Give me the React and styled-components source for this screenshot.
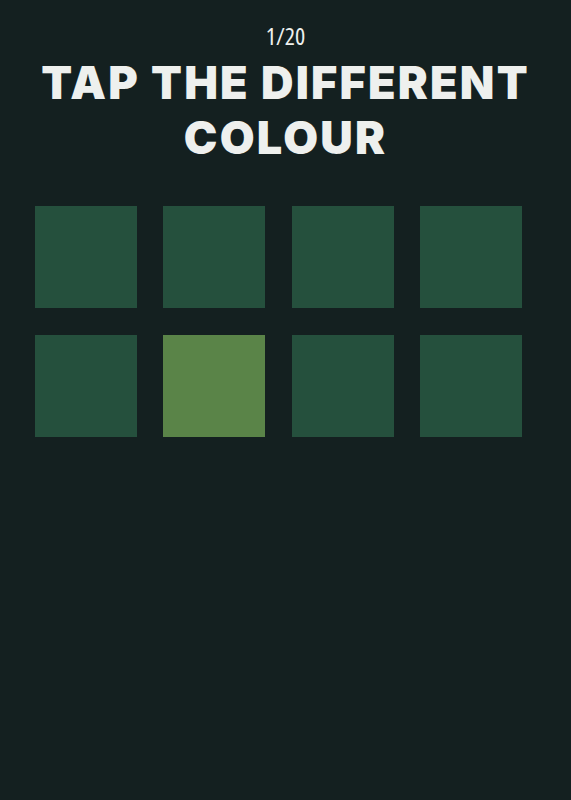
import React from 'react';
import styled, { createGlobalStyle } from 'styled-components';

const GlobalStyle = createGlobalStyle`
  html, body {
    margin: 0;
    padding: 0;
    background: #142020;
  }
`;

// one odd tile per round, everything else shares the base colour
const tiles = [
  false, false, false, false,
  false, true, false, false,
];

const App = () => (
  <>
    <GlobalStyle />
    <Screen>
      <Counter>1/20</Counter>
      <Title>
        Tap the different
        <br />
        colour
      </Title>
      <Board>
        {tiles.map((odd, i) => (
          <Tile key={i} $odd={odd} />
        ))}
      </Board>
    </Screen>
  </>
);

export default App;

const Screen = styled.div`
  min-height: 800px;
  display: flex;
  flex-direction: column;
  align-items: center;
  background: #142020;
  padding-top: 20px;
  box-sizing: border-box;
`;

const Counter = styled.div`
  font-family: "Open Sans", sans-serif;
  font-stretch: condensed;
  font-size: 24px;
  line-height: 32px;
  color: #eef0ee;
`;

const Title = styled.h1`
  margin: 3px 0 0;
  text-align: center;
  font-family: Inter, sans-serif;
  font-weight: 900;
  font-size: 45px;
  line-height: 55px;
  letter-spacing: 2.2px;
  text-transform: uppercase;
  white-space: nowrap;
  color: #eef0ee;
`;

const Board = styled.div`
  align-self: flex-start;
  margin: 41px 0 0 35px;
  display: grid;
  grid-template-columns: repeat(4, 102px);
  grid-auto-rows: 102px;
  column-gap: 26.4px;
  row-gap: 27px;
`;

const Tile = styled.button`
  border: none;
  padding: 0;
  cursor: pointer;
  background: ${(p) => (p.$odd ? '#5a8448' : '#25503d')};
`;
